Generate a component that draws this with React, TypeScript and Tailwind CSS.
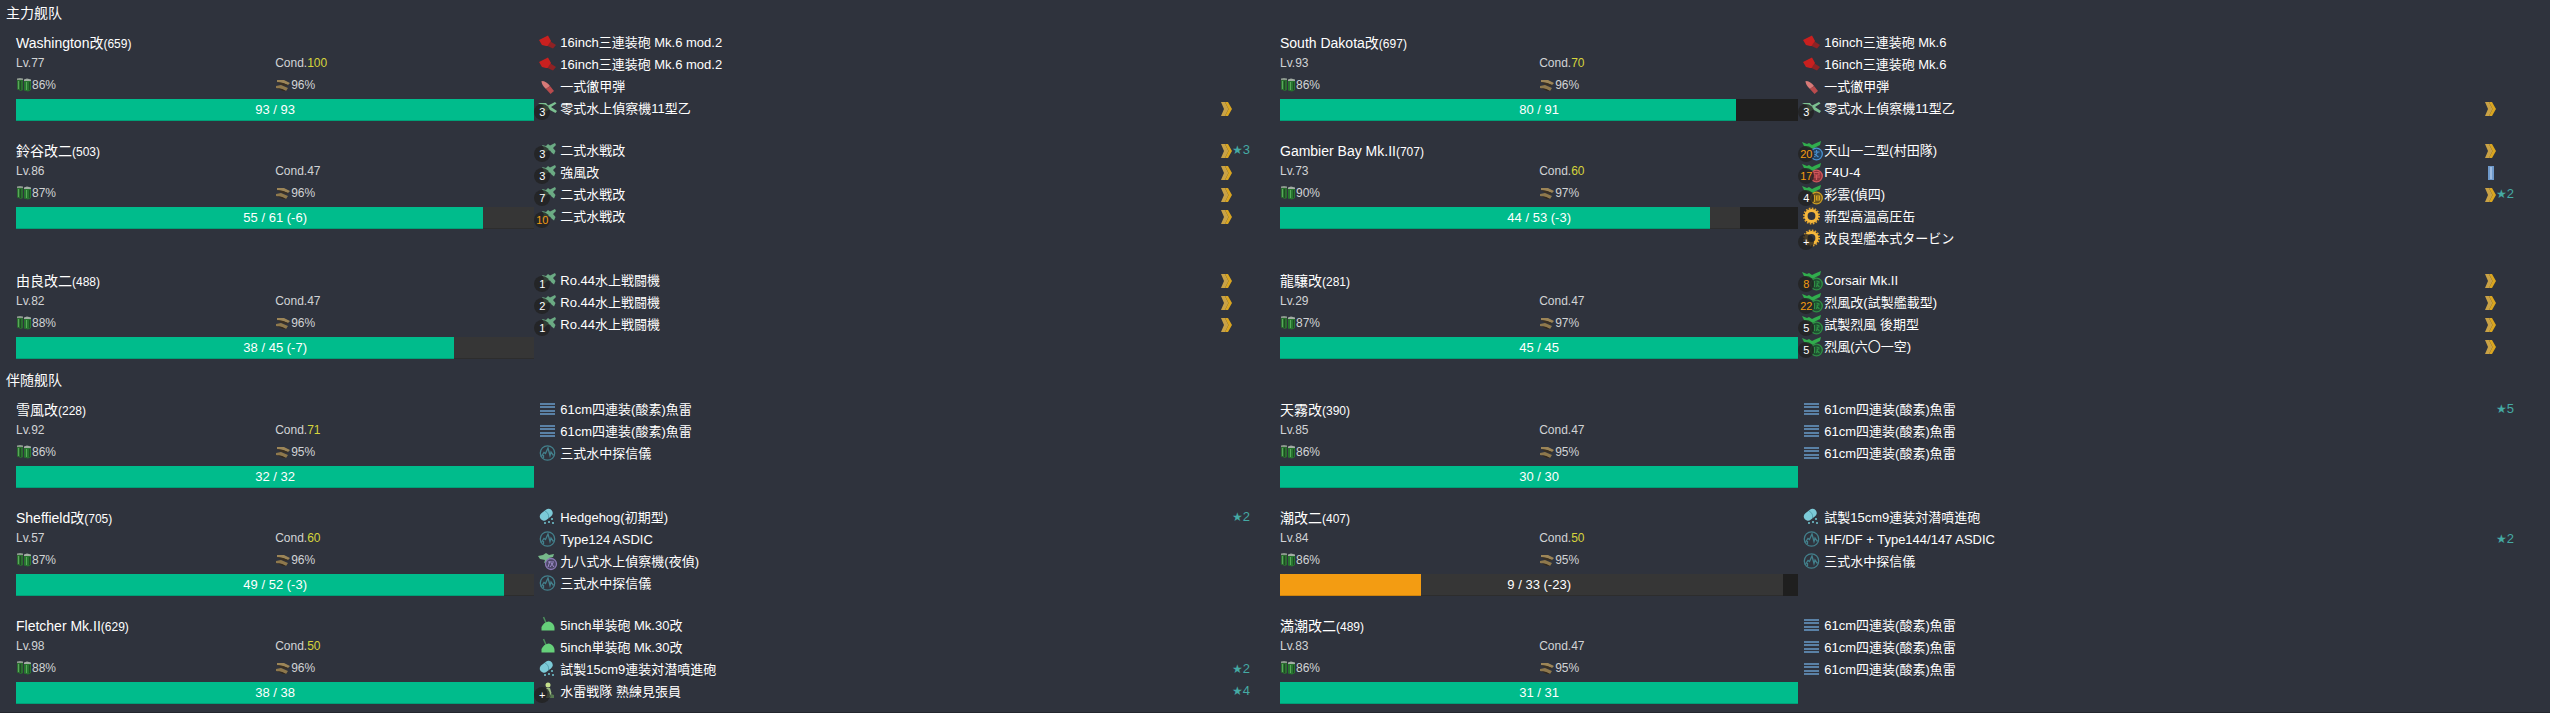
import React from "react";

type IconKind =
  | "bigGun" | "shell" | "seaplane" | "seaFighter" | "torpedo" | "sonar"
  | "asw" | "nightPlane" | "highGun" | "lookout" | "engine"
  | "attack" | "bomb" | "scout" | "fighter";

type Gear = {
  icon: IconKind;
  name: string;
  count?: string;
  hot?: boolean;
  rank?: "gold" | "blue";
  star?: number;
};

type Ship = {
  name: string;
  id: number;
  lv: number;
  cond: number;
  fuel: number;
  ammo: number;
  hp: number;
  max: number;
  loss?: number;
  gear: Gear[];
};

const torpedo: Gear = { icon: "torpedo", name: "61cm四連装(酸素)魚雷" };
const sonar: Gear = { icon: "sonar", name: "三式水中探信儀" };

const mainFleet: Ship[] = [
  {
    name: "Washington改", id: 659, lv: 77, cond: 100, fuel: 86, ammo: 96, hp: 93, max: 93,
    gear: [
      { icon: "bigGun", name: "16inch三連装砲 Mk.6 mod.2" },
      { icon: "bigGun", name: "16inch三連装砲 Mk.6 mod.2" },
      { icon: "shell", name: "一式徹甲弾" },
      { icon: "seaplane", name: "零式水上偵察機11型乙", count: "3", rank: "gold" },
    ],
  },
  {
    name: "South Dakota改", id: 697, lv: 93, cond: 70, fuel: 86, ammo: 96, hp: 80, max: 91,
    gear: [
      { icon: "bigGun", name: "16inch三連装砲 Mk.6" },
      { icon: "bigGun", name: "16inch三連装砲 Mk.6" },
      { icon: "shell", name: "一式徹甲弾" },
      { icon: "seaplane", name: "零式水上偵察機11型乙", count: "3", rank: "gold" },
    ],
  },
  {
    name: "鈴谷改二", id: 503, lv: 86, cond: 47, fuel: 87, ammo: 96, hp: 55, max: 61, loss: 6,
    gear: [
      { icon: "seaFighter", name: "二式水戦改", count: "3", rank: "gold", star: 3 },
      { icon: "seaFighter", name: "強風改", count: "3", rank: "gold" },
      { icon: "seaFighter", name: "二式水戦改", count: "7", rank: "gold" },
      { icon: "seaFighter", name: "二式水戦改", count: "10", hot: true, rank: "gold" },
    ],
  },
  {
    name: "Gambier Bay Mk.II", id: 707, lv: 73, cond: 60, fuel: 90, ammo: 97, hp: 44, max: 53, loss: 3,
    gear: [
      { icon: "attack", name: "天山一二型(村田隊)", count: "20", hot: true, rank: "gold" },
      { icon: "bomb", name: "F4U-4", count: "17", hot: true, rank: "blue" },
      { icon: "scout", name: "彩雲(偵四)", count: "4", rank: "gold", star: 2 },
      { icon: "engine", name: "新型高温高圧缶" },
      { icon: "engine", name: "改良型艦本式タービン", count: "+" },
    ],
  },
  {
    name: "由良改二", id: 488, lv: 82, cond: 47, fuel: 88, ammo: 96, hp: 38, max: 45, loss: 7,
    gear: [
      { icon: "seaFighter", name: "Ro.44水上戦闘機", count: "1", rank: "gold" },
      { icon: "seaFighter", name: "Ro.44水上戦闘機", count: "2", rank: "gold" },
      { icon: "seaFighter", name: "Ro.44水上戦闘機", count: "1", rank: "gold" },
    ],
  },
  {
    name: "龍驤改", id: 281, lv: 29, cond: 47, fuel: 87, ammo: 97, hp: 45, max: 45,
    gear: [
      { icon: "fighter", name: "Corsair Mk.II", count: "8", hot: true, rank: "gold" },
      { icon: "fighter", name: "烈風改(試製艦載型)", count: "22", hot: true, rank: "gold" },
      { icon: "fighter", name: "試製烈風 後期型", count: "5", rank: "gold" },
      { icon: "fighter", name: "烈風(六〇一空)", count: "5", rank: "gold" },
    ],
  },
];

const escortFleet: Ship[] = [
  {
    name: "雪風改", id: 228, lv: 92, cond: 71, fuel: 86, ammo: 95, hp: 32, max: 32,
    gear: [torpedo, torpedo, sonar],
  },
  {
    name: "天霧改", id: 390, lv: 85, cond: 47, fuel: 86, ammo: 95, hp: 30, max: 30,
    gear: [{ ...torpedo, star: 5 }, torpedo, torpedo],
  },
  {
    name: "Sheffield改", id: 705, lv: 57, cond: 60, fuel: 87, ammo: 96, hp: 49, max: 52, loss: 3,
    gear: [
      { icon: "asw", name: "Hedgehog(初期型)", star: 2 },
      { icon: "sonar", name: "Type124 ASDIC" },
      { icon: "nightPlane", name: "九八式水上偵察機(夜偵)" },
      sonar,
    ],
  },
  {
    name: "潮改二", id: 407, lv: 84, cond: 50, fuel: 86, ammo: 95, hp: 9, max: 33, loss: 23,
    gear: [
      { icon: "asw", name: "試製15cm9連装対潜噴進砲" },
      { icon: "sonar", name: "HF/DF + Type144/147 ASDIC", star: 2 },
      sonar,
    ],
  },
  {
    name: "Fletcher Mk.II", id: 629, lv: 98, cond: 50, fuel: 88, ammo: 96, hp: 38, max: 38,
    gear: [
      { icon: "highGun", name: "5inch単装砲 Mk.30改" },
      { icon: "highGun", name: "5inch単装砲 Mk.30改" },
      { icon: "asw", name: "試製15cm9連装対潜噴進砲", star: 2 },
      { icon: "lookout", name: "水雷戦隊 熟練見張員", count: "+", star: 4 },
    ],
  },
  {
    name: "満潮改二", id: 489, lv: 83, cond: 47, fuel: 86, ammo: 95, hp: 31, max: 31,
    gear: [torpedo, torpedo, torpedo],
  },
];

function CarrierPlane({ ring, fill, mark }: { ring: string; fill: string; mark: string }) {
  return (
    <>
      <path d="M0 1 5 3 7 2 10 4 13 2.500 19 0 18 4 14 6 11 8 7 7 2 5Z" fill="#31ad4d" />
      <circle cx="14.500" cy="13" r="5.800" fill={fill} stroke={ring} strokeWidth="1.300" />
      <path d={mark} fill="none" stroke={ring} strokeWidth="1.200" />
    </>
  );
}

function GearGlyph({ kind }: { kind: IconKind }) {
  switch (kind) {
    case "bigGun":
      return (
        <>
          <path d="M1 7 10 2.500 13 8 11 13 8 13 4 12Z" fill="#c9201f" />
          <path d="M12.500 8.500 18 12 15 15.500 9.500 13Z" fill="#8f2224" />
        </>
      );
    case "shell":
      return (
        <>
          <path d="M3.500 4C7 4 10 6 12 9L8 12C5 9 3.500 7 3.500 4Z" fill="#d87a78" />
          <path d="M12 9 16 14 12.500 17 8 12Z" fill="#b94b4d" />
        </>
      );
    case "seaplane":
      return (
        <path d="M0 4 8 4 10 6.500 17 3 18.500 4.500 13 8 19 12 17.500 14 11 10.500 6 14 4 12 7 9 1 9.500 6 7Z" fill="#7cc091" />
      );
    case "seaFighter":
      return (
        <path d="M4 4 8 5 10 3 12 4.500 17 2 18 4 15 7 17.500 10 16 13.500 13.500 11.500 12 9.500 9 10 6 13 4 11 6 7.500Z" fill="#6bab84" />
      );
    case "torpedo":
      return (
        <g fill="#5a81a6">
          <rect x="2" y="3" width="15" height="2" />
          <rect x="2" y="6" width="15" height="2" />
          <rect x="2" y="10" width="15" height="2" />
          <rect x="2" y="13" width="15" height="2" />
        </g>
      );
    case "sonar":
      return (
        <g fill="none" stroke="#43808c" strokeWidth="1.300">
          <circle cx="9.500" cy="9" r="7.200" />
          <path d="M3 13 6 8.500 7.500 9.500 10 4 12 11.500 13 8 15.500 11.500M5.500 14V11" />
        </g>
      );
    case "asw":
      return (
        <>
          <path d="M6 8.500 10.500 5" stroke="#7ccad7" strokeWidth="8.500" strokeLinecap="round" />
          <path d="M7 3C10 4.500 11 7 10.500 10" fill="none" stroke="#55a3b1" strokeWidth="1" />
          <g fill="#61a2ad">
            <rect x="13" y="10" width="2" height="2" />
            <rect x="6" y="14" width="2" height="2" />
            <rect x="10" y="13" width="2" height="2" />
            <rect x="14" y="14" width="2" height="2" />
          </g>
        </>
      );
    case "nightPlane":
      return (
        <>
          <path d="M0 4 5 3 8 1 11 3 16 2 15 5 11 6 11 9 6 11 7 8 2 7Z" fill="#76b98a" />
          <circle cx="13" cy="12" r="5.500" fill="#4b4666" stroke="#8a78b4" strokeWidth="1.300" />
          <path d="M10 10H16M12 9 10 15M13 11 16 15M15 11 12 15" fill="none" stroke="#9c8bc6" />
        </>
      );
    case "highGun":
      return (
        <>
          <path d="M5.500 1 8.500 8" stroke="#4b8f5c" strokeWidth="1.500" />
          <path d="M3.500 14.500V11C5 8 7 6 10.500 5.500C14 6 16.500 9 16.500 12V14.500Z" fill="#66d07a" />
        </>
      );
    case "lookout":
      return (
        <>
          <circle cx="10" cy="3" r="2.500" fill="#c5e08c" />
          <path d="M8 6H12L13.500 11 11 16H8L9.500 11Z" fill="#9dbd85" />
          <path d="M13 12 16 13V16H12Z" fill="#56784f" />
        </>
      );
    case "engine":
      return (
        <>
          <circle cx="9.500" cy="9" r="7.500" fill="none" stroke="#e5a72f" strokeWidth="2" strokeDasharray="1.600 1.350" />
          <circle cx="9.500" cy="9" r="5.500" fill="none" stroke="#f6b83c" strokeWidth="3.200" />
        </>
      );
    case "attack":
      return <CarrierPlane ring="#4a90d0" fill="#24425f" mark="M11.500 11H17.500M14.500 9V11M12.500 16 15.500 11M12.500 13 16.500 16" />;
    case "bomb":
      return <CarrierPlane ring="#d2565c" fill="#8c343a" mark="M12 9.500H17V12H12ZM11 14H18M14.500 12V17" />;
    case "scout":
      return <CarrierPlane ring="#cf9f22" fill="#6a5420" mark="M12.500 10V17M14.500 11H17.500V15H14.500ZM14.500 13H17.500" />;
    case "fighter":
      return <CarrierPlane ring="#2f8f45" fill="#1f5131" mark="M12.500 10V16M14.500 10 17.500 11M14.500 12H17.500M15.500 12 14.500 16M15.500 14 17.500 16" />;
  }
}

function GearIcon({ gear }: { gear: Gear }) {
  return (
    <span className="relative flex h-[22px] w-[26px] shrink-0 items-center pl-1">
      <svg viewBox="0 -1 20 20" className="size-5 shrink-0 overflow-visible" aria-hidden="true">
        <GearGlyph kind={gear.icon} />
      </svg>
      {gear.count && (
        <span
          className={
            "absolute left-0 top-[7px] flex size-4 items-center justify-center rounded-full bg-[#222222]/80 text-[11px] leading-4 " +
            (gear.hot ? "text-[#f39c12]" : "text-white")
          }
        >
          {gear.count}
        </span>
      )}
    </span>
  );
}

function RankMark({ rank }: { rank?: "gold" | "blue" }) {
  return (
    <span className="flex w-3 shrink-0 justify-center">
      {rank === "gold" && (
        <svg viewBox="0 0 12 16" className="h-4 w-3" aria-hidden="true">
          <path d="M1 1H5L8.500 8 5 15H1L4 8Z" fill="#c9a246" />
          <path d="M5 1H8L12 8 8 15H5L8.500 8Z" fill="#d9a520" />
        </svg>
      )}
      {rank === "blue" && (
        <svg viewBox="0 0 12 16" className="h-4 w-3" aria-hidden="true">
          <rect x="4" y="1" width="6" height="14" fill="#6f9acb" />
          <rect x="6" y="2" width="2" height="12" fill="#9dbbe0" />
        </svg>
      )}
    </span>
  );
}

function FuelIcon() {
  return (
    <svg viewBox="0 0 16 16" className="size-4" aria-hidden="true">
      <path d="M1 2H7V13L5 14 1 12.500Z" fill="#2c6e31" />
      <path d="M8 3H15V13L12 14.500 8 13.500Z" fill="#27752f" />
      <path d="M2.500 4V12M10.500 5V13" stroke="#58a85a" />
      <path d="M4.500 4V13M13.500 5V13" stroke="#1d4d23" />
      <path d="M1 1.500 4 1 7 1.500V3H1Z" fill="#8d998e" />
      <path d="M8 2.500 11 1.500 15 2.500V4H8Z" fill="#a3ada4" />
    </svg>
  );
}

function AmmoIcon() {
  return (
    <svg viewBox="0 0 16 16" className="size-4" aria-hidden="true">
      <path d="M2 3 9 3 15 6 13 8 8 6 2 5Z" fill="#9c8557" />
      <path d="M2 5 8 6 13 8 12 9 7 8Z" fill="#3b3020" />
      <path d="M1 9 6 8 13 11 11 14 7 12 1 11Z" fill="#8e784c" />
      <path d="M2 11 7 12 11 14 8 14Z" fill="#33291c" />
    </svg>
  );
}

function HealthBar({ ship }: { ship: Ship }) {
  const { hp, max, loss = 0 } = ship;
  const fill = hp / max > 0.5 ? "bg-[#00bc8c]" : "bg-[#f39c12]";
  return (
    <div
      role="meter"
      aria-label={ship.name + " HP"}
      aria-valuenow={hp}
      aria-valuemin={0}
      aria-valuemax={max}
      className="relative mt-[3px] flex h-[22px] bg-[#1f1f1f]"
    >
      <div
        className={fill + " shadow-[inset_0_-1px_0_rgba(0,0,0,0.15)]"}
        style={{ width: (hp / max) * 100 + "%" }}
      />
      <div
        className="bg-[#363636] shadow-[inset_0_-1px_0_rgba(0,0,0,0.15)]"
        style={{ width: (loss / max) * 100 + "%" }}
      />
      <span className="absolute inset-0 text-center text-[13px] leading-[21px]">
        {hp} / {max}
        {loss > 0 && " (-" + loss + ")"}
      </span>
    </div>
  );
}

function ShipCard({ ship }: { ship: Ship }) {
  return (
    <article className="grid grid-cols-12 px-2.5 pt-2.5 pb-2">
      <div className="col-span-5">
        <h3 className="h-[21px] text-sm leading-6">
          {ship.name}
          <span className="text-xs">({ship.id})</span>
        </h3>
        <div className="grid grid-cols-2 text-xs leading-[22px] text-[#d2d4d6]">
          <span>Lv.{ship.lv}</span>
          <span>
            Cond.
            <span className={ship.cond >= 50 ? "text-[#d6d53c]" : ""}>{ship.cond}</span>
          </span>
          <span className="flex items-center">
            <FuelIcon />
            {ship.fuel}%
          </span>
          <span className="flex items-center">
            <AmmoIcon />
            {ship.ammo}%
          </span>
        </div>
        <HealthBar ship={ship} />
      </div>
      <ul className="col-span-7 pb-0.5 text-[13px] leading-6">
        {ship.gear.map((g, i) => (
          <li key={i} className="flex h-[22px]">
            <GearIcon gear={g} />
            <span className="flex-1">{g.name}</span>
            <span className="flex h-6 items-center">
              <RankMark rank={g.rank} />
            </span>
            <span className="flex h-[22px] w-7 items-center text-[#45aaa4]">
              {g.star && (
                <>
                  <span className="font-['DejaVu_Sans',sans-serif] text-xs">★</span>
                  {g.star}
                </>
              )}
            </span>
          </li>
        ))}
      </ul>
    </article>
  );
}

function Fleet({ title, ships }: { title: string; ships: Ship[] }) {
  return (
    <section>
      <h2 className="h-[21px] text-sm leading-[26px]">{title}</h2>
      <div className="grid grid-cols-2">
        {ships.map((s) => (
          <ShipCard key={s.id} ship={s} />
        ))}
      </div>
    </section>
  );
}

export default function App() {
  return (
    <div className="min-h-screen bg-[#23262e]">
      <main className="bg-[#2f333d] pl-1.5 pr-4 font-['Liberation_Sans','Noto_Sans_CJK_SC',sans-serif] text-white">
        <Fleet title="主力舰队" ships={mainFleet} />
        <Fleet title="伴随舰队" ships={escortFleet} />
      </main>
    </div>
  );
}
